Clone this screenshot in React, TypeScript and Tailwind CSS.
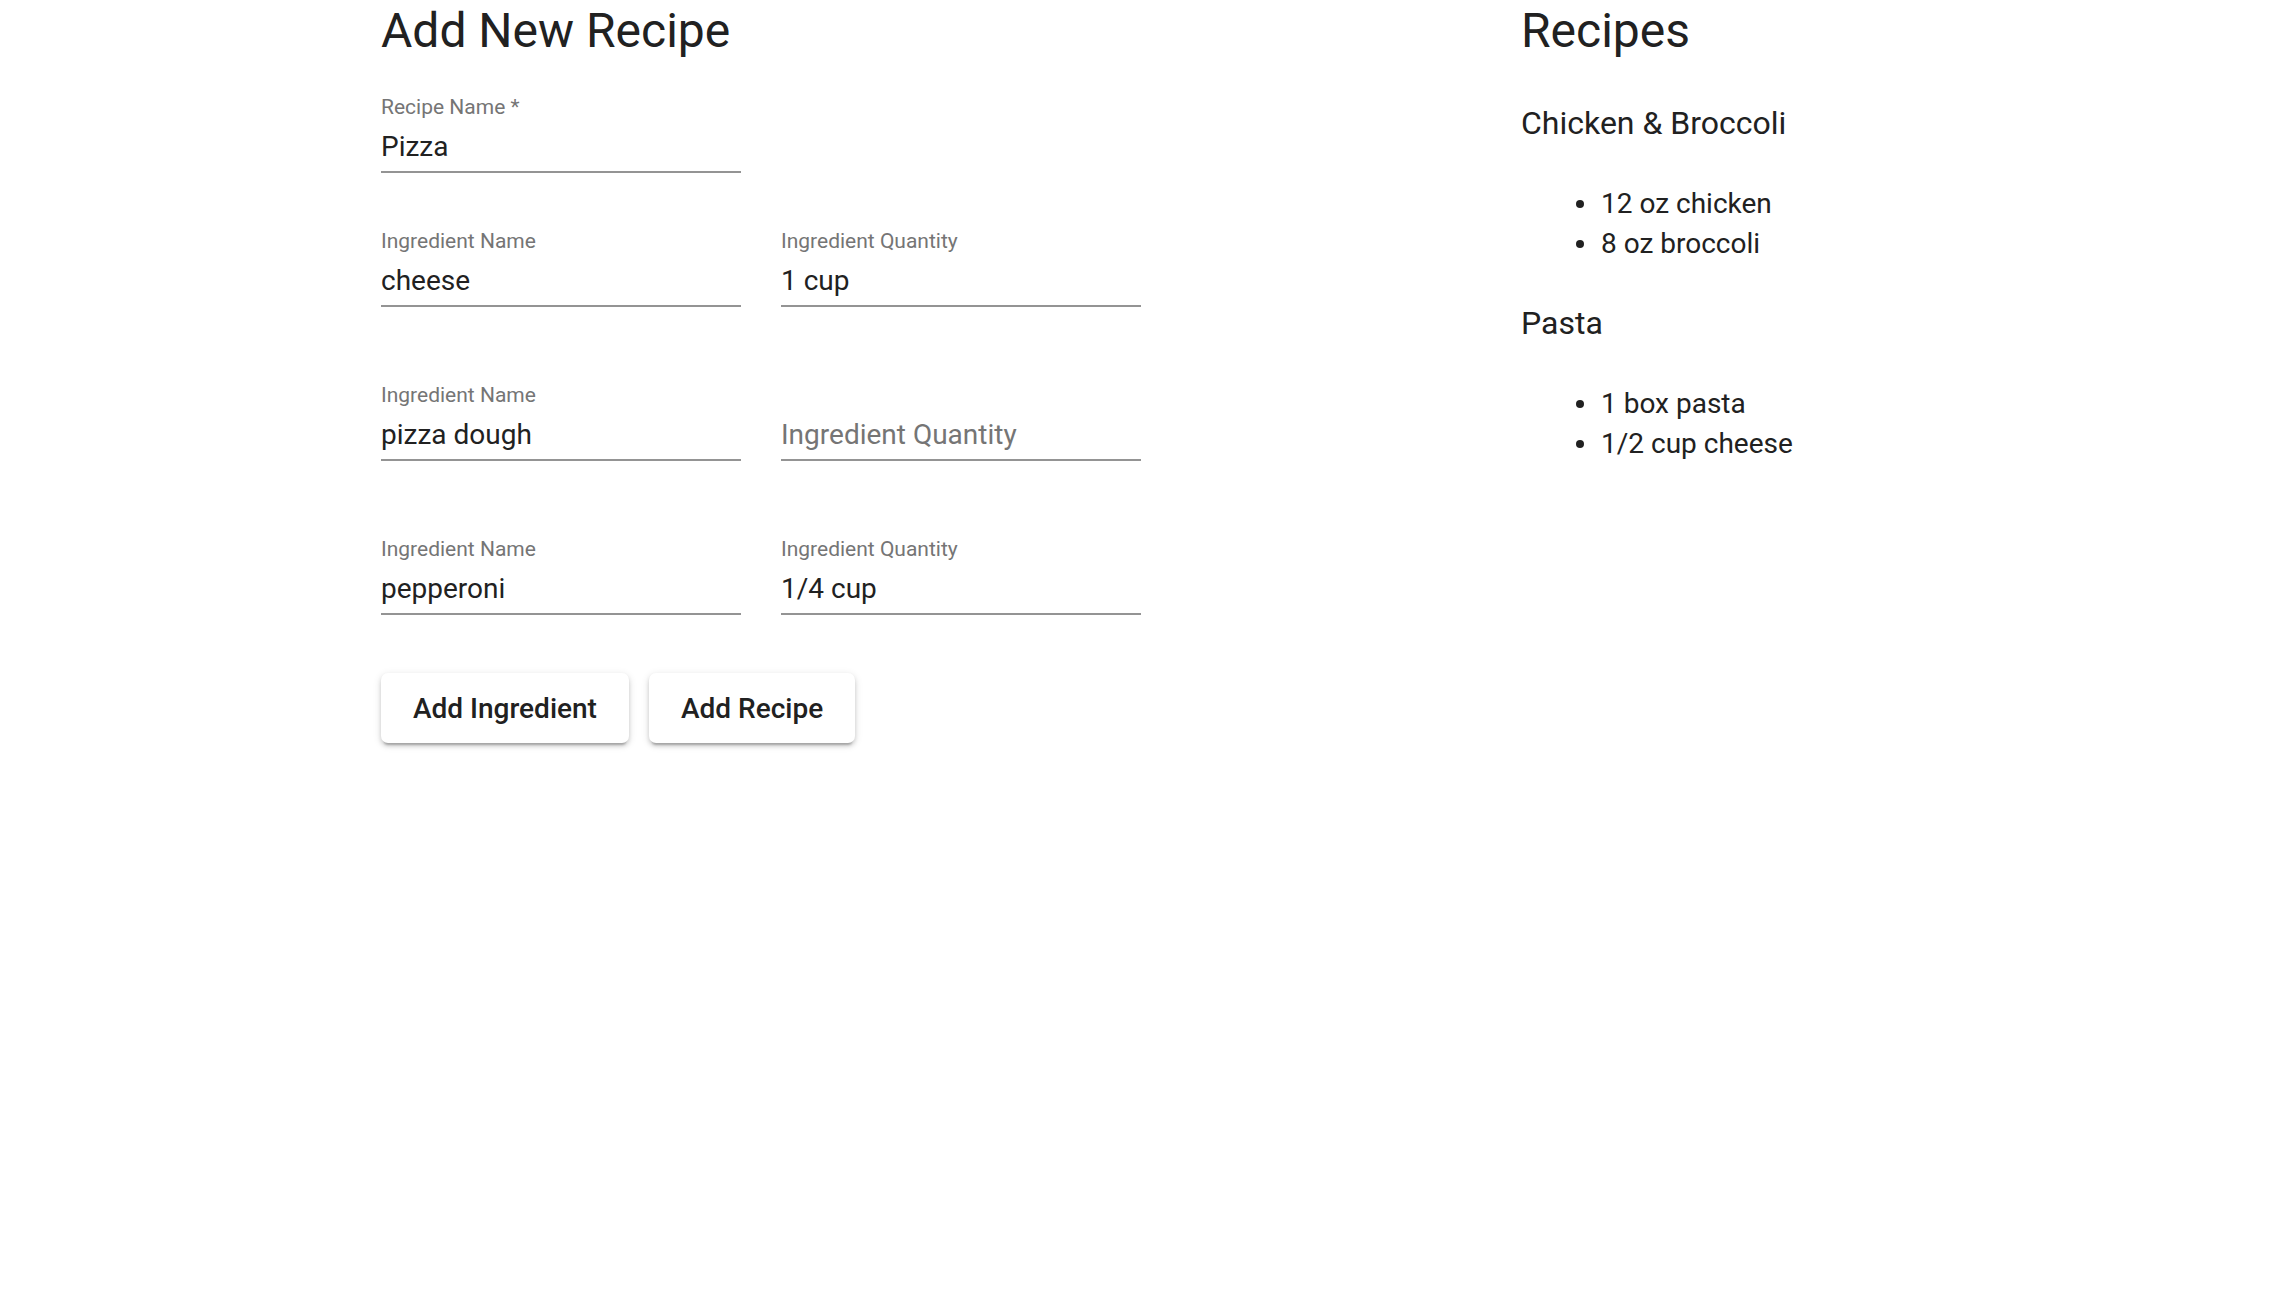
import React from "react";

interface FieldProps {
  label: string;
  value?: string;
}

// Underlined text field, label sits above the value.
function Field({ label, value }: FieldProps) {
  const empty = !value;
  return (
    <div className="flex w-[360px] flex-col">
      <div className="h-[24px] text-[21px] leading-[24px] text-[#757575]">{empty ? "" : label}</div>
      <div
        className={`mt-[8px] h-[40px] text-[28px] leading-[40px] ${
          empty ? "text-[#757575]" : "text-[#212121]"
        }`}
      >
        {empty ? label : value}
      </div>
      <div className="mt-[4.5px] h-[2px] bg-[#949494]" />
    </div>
  );
}

function ActionButton({ children }: { children: React.ReactNode }) {
  return (
    <button className="flex h-[70px] items-center rounded-[7px] bg-white px-[32px] pt-[2px] text-[28px] font-medium leading-[40px] text-[#212121] shadow-[0_5px_2px_-3px_rgba(0,0,0,0.2),0_3px_4px_0_rgba(0,0,0,0.14),0_2px_9px_0_rgba(0,0,0,0.12)]">
      {children}
    </button>
  );
}

const INGREDIENTS = [
  { name: "cheese", qty: "1 cup" },
  { name: "pizza dough", qty: "" },
  { name: "pepperoni", qty: "1/4 cup" },
];

const RECIPES = [
  { title: "Chicken & Broccoli", items: ["12 oz chicken", "8 oz broccoli"], first: true },
  { title: "Pasta", items: ["1 box pasta", "1/2 cup cheese"], first: false },
];

export default function App() {
  return (
    <div className="min-h-screen bg-white pl-[381px] font-['Roboto',sans-serif] text-[#212121]">
      <div className="grid grid-cols-[1140px_1fr]">
        {/* Form */}
        <div className="flex flex-col">
          <h1 className="pt-[3px] text-[48px] leading-[56px] font-normal">Add New Recipe</h1>

          <div className="mt-[35.5px]">
            <Field label="Recipe Name *" value="Pizza" />
          </div>

          <div className="mt-[55.5px] flex flex-col gap-[75.5px]">
            {INGREDIENTS.map((ing, i) => (
              <div key={i} className="flex gap-[40px]">
                <Field label="Ingredient Name" value={ing.name} />
                <Field label="Ingredient Quantity" value={ing.qty} />
              </div>
            ))}
          </div>

          <div className="mt-[58px] flex gap-[20px]">
            <ActionButton>Add Ingredient</ActionButton>
            <ActionButton>Add Recipe</ActionButton>
          </div>
        </div>

        {/* Recipe list */}
        <div className="flex flex-col">
          <h1 className="pt-[3px] text-[48px] leading-[56px] font-normal">Recipes</h1>
          {RECIPES.map((r) => (
            <div key={r.title} className={r.first ? "mt-[44px]" : "mt-[39px]"}>
              <h3 className="text-[32px] leading-[40px] font-normal">{r.title}</h3>
              <ul className="mt-[41px]">
                {r.items.map((it) => (
                  <li key={it} className="flex h-[40px] items-center pl-[55px] text-[28px] leading-[40px]">
                    <span className="h-[8px] w-[8px] rounded-full bg-[#212121]" />
                    <span className="ml-[17px]">{it}</span>
                  </li>
                ))}
              </ul>
            </div>
          ))}
        </div>
      </div>
    </div>
  );
}
